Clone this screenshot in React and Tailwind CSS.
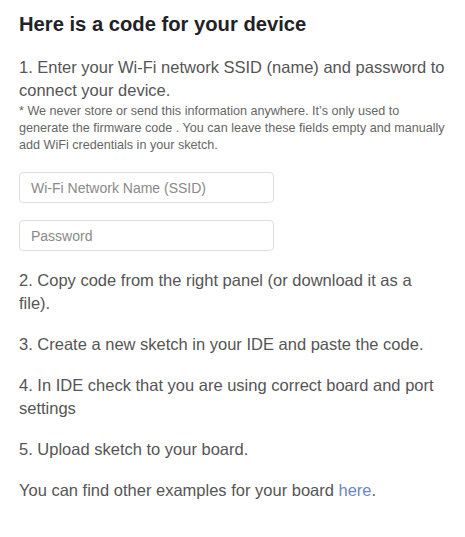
import React from 'react';

export default function App() {
  return (
    <div className="min-h-[537px] w-[465px] bg-white px-[19px] pt-[11px] font-['Liberation_Sans',Arial,sans-serif] text-[#555]">
      <h2 className="text-[20.2px] font-bold leading-[26px] text-[#222226]">Here is a code for your device</h2>

      <div className="mt-[19px]">
        <p className="text-[16.5px] leading-[23px]">
          1. Enter your Wi-Fi network SSID (name) and password to connect your device.
        </p>
        <p className="mt-[1px] text-[12.6px] leading-[17px] text-[#666]">
          * We never store or send this information anywhere. It’s only used to generate the firmware code . You can
          leave these fields empty and manually add WiFi credentials in your sketch.
        </p>
      </div>

      <div className="mt-[18px] flex flex-col gap-[17px]">
        <input
          type="text"
          placeholder="Wi-Fi Network Name (SSID)"
          className="h-[31px] w-[255px] rounded-[4px] border border-[#ddd] px-[11px] text-[14px] text-[#555] placeholder:text-[#8a8a8a] outline-none"
        />
        <input
          type="password"
          placeholder="Password"
          className="h-[31px] w-[255px] rounded-[4px] border border-[#ddd] px-[11px] text-[14px] text-[#555] placeholder:text-[#8a8a8a] outline-none"
        />
      </div>

      <div className="mt-[18px] flex flex-col gap-[18px] text-[16.5px] leading-[23px]">
        <p>2. Copy code from the right panel (or download it as a file).</p>
        <p>3. Create a new sketch in your IDE and paste the code.</p>
        <p>4. In IDE check that you are using correct board and port settings</p>
        <p>5. Upload sketch to your board.</p>
        <p>
          You can find other examples for your board{' '}
          <a href="#" className="text-[#6d85c9]">here</a>.
        </p>
      </div>
    </div>
  );
}
